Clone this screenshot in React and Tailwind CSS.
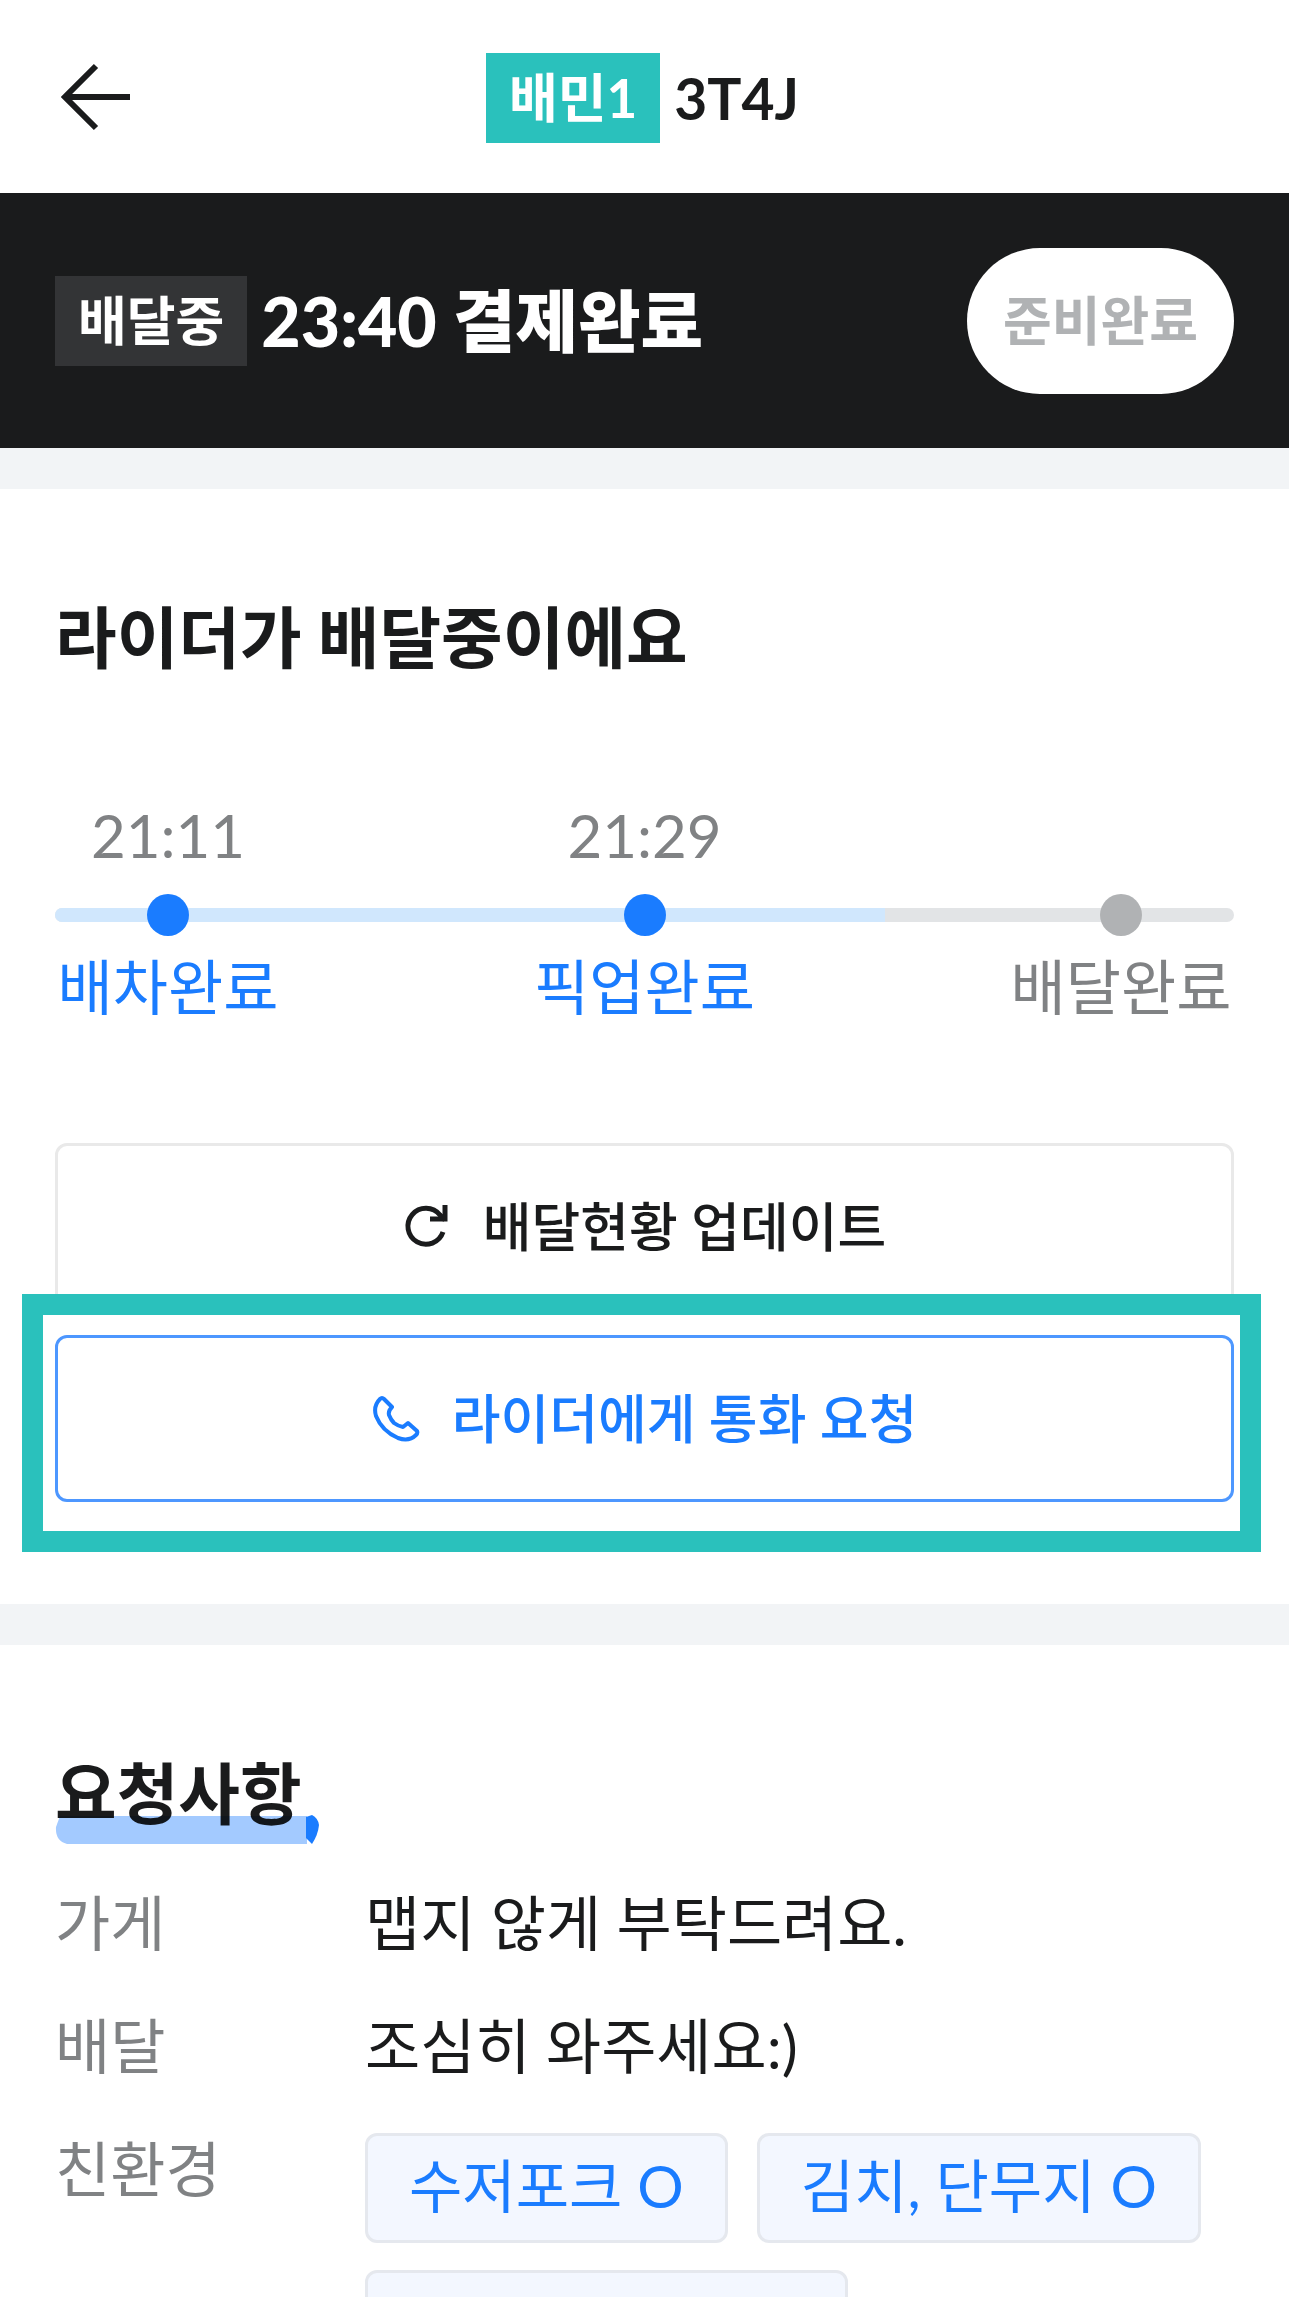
import clsx from 'clsx';

const steps = [
  { time: '21:11', label: '배차완료', done: true },
  { time: '21:29', label: '픽업완료', done: true },
  { time: '', label: '배달완료', done: false },
];

const ArrowLeft = () => (
  <svg viewBox="0 0 72 68" className="w-[72px] h-[68px]" fill="none" stroke="#1a1b1c" strokeWidth="6">
    <path d="M36 3 L5 34 L36 65 M5 34 H70" />
  </svg>
);

const RefreshIcon = () => (
  <svg viewBox="0 0 48 48" className="size-12" fill="none" stroke="#1a1b1c" strokeWidth="5">
    <path d="M40 29 A18 18 0 1 1 37 12 L42 17" />
    <path d="M42 2 V16 H27" />
    <path d="M35 16 L42 9 V16 Z" fill="#1a1b1c" stroke="none" />
  </svg>
);

const PhoneIcon = () => (
  <svg viewBox="0 0 48 48" className="size-12" fill="none" stroke="#1a7cff" strokeWidth="4" strokeLinejoin="round">
    <path d="M8 4 Q10 2 12 4 L20 12 Q16 16 17 20 Q19 25 22 28 Q26 31 31 32 L36 28 L45 36 Q46 38 44 40 Q37 47 26 43 Q10 36 4 21 Q1 11 8 4 Z" />
  </svg>
);

const Header = () => (
  <header className="grid grid-cols-[1fr_auto_1fr] items-center h-[193px] pl-[60px] pr-16">
    <button type="button" aria-label="뒤로" className="justify-self-start">
      <ArrowLeft />
    </button>
    <h1 className="flex items-center gap-[14px] pt-[2px] font-bold">
      <span className="bg-[#2ac1bc] text-white text-[53px] leading-[90px] px-[23px]">배민1</span>
      <span className="text-[57px] leading-[90px]">3T4J</span>
    </h1>
  </header>
);

const StatusBar = () => (
  <section className="flex items-center justify-between h-[255px] px-[55px] bg-[#1a1b1c] text-white font-bold">
    <div className="flex items-center gap-[14px]">
      <span className="bg-[#333436] text-[53px] leading-[90px] px-[23px]">배달중</span>
      <strong className="text-[68px] leading-[96px]">23:40 결제완료</strong>
    </div>
    <button type="button" className="bg-white text-[#b0b2b4] text-[53px] leading-[146px] rounded-full px-9">
      준비완료
    </button>
  </section>
);

const Timeline = () => (
  <div className="relative mt-[120px]">
    <div className="absolute inset-x-0 top-[103px] h-[14px] rounded-full bg-[#e2e4e6] overflow-hidden">
      <div className="h-full bg-[#d0e7fd]" style={{ width: '70.4%' }} />
    </div>
    <ol className="relative flex justify-between text-[60px] leading-[60px]">
      {steps.map((step) => (
        <li key={step.label} className="flex flex-col items-center w-[226px]">
          <time className="h-[60px] text-[#808284]">{step.time}</time>
          <span className={clsx('size-[42px] mt-[29px] mb-[21px] rounded-full', step.done ? 'bg-[#1a7cff]' : 'bg-[#b0b2b4]')} />
          <span className={step.done ? 'text-[#1a7cff]' : 'text-[#808284]'}>{step.label}</span>
        </li>
      ))}
    </ol>
  </div>
);

const ActionButton = ({ icon, className, children }) => (
  <button
    type="button"
    className={clsx('flex items-center justify-center gap-8 w-full h-[167px] border-[3px] rounded-xl text-[53px] leading-[80px] font-medium', className)}
  >
    {icon}
    {children}
  </button>
);

const Row = ({ label, children }) => (
  <div className="flex">
    <dt className="w-[310px] shrink-0 text-[#808284]">{label}</dt>
    <dd className="flex-1">{children}</dd>
  </div>
);

const Chip = ({ children, className }) => (
  <li className={clsx('h-[110px] px-[41px] border-[3px] border-[#e5e8ee] rounded-xl bg-[#f3f7ff] text-[#1a7cff] text-[58px] leading-[100px]', className)}>
    {children}
  </li>
);

const Divider = () => <div className="h-[41px] bg-[#f2f4f6]" />;

const App = () => {
  return (
    <main
      lang="ko"
      className="h-screen overflow-hidden bg-white text-[#1a1b1c] font-[Lato,'Noto_Sans_CJK_KR',sans-serif]"
    >
      <Header />
      <StatusBar />
      <Divider />

      <section className="px-[55px] pt-[100px] pb-[102px]">
        <h2 className="text-[67px] leading-[96px] font-bold">라이더가 배달중이에요</h2>
        <Timeline />
        <div className="mt-[126px]">
          <ActionButton icon={<RefreshIcon />} className="border-[#e9e9e9]">
            배달현황 업데이트
          </ActionButton>
          <div className="relative mt-[25px]">
            <ActionButton icon={<PhoneIcon />} className="border-[#4d97ff] text-[#1a7cff]">
              라이더에게 통화 요청
            </ActionButton>
            {/* highlight frame around the call button */}
            <div className="absolute -left-[33px] -right-[27px] -top-[41px] -bottom-[50px] border-[21px] border-[#2ac1bc] pointer-events-none" />
          </div>
        </div>
      </section>

      <Divider />

      <section className="px-[55px] pt-[100px]">
        <h2 className="relative w-fit text-[67px] leading-[96px] font-bold">
          요청사항
          <svg viewBox="0 0 264 30" className="absolute left-0 top-[70px] w-[264px] h-[30px] mix-blend-multiply">
            <path d="M5 1 H252 V29 H12 Q0 26 1 12 Z" fill="#a3caff" />
            <path d="M251 2 L257 0 Q263 3 264 10 Q263 20 257 29 L251 23 Z" fill="#1a7cff" />
          </svg>
        </h2>
        <dl className="flex flex-col gap-[43px] mt-[42px] text-[60px] leading-[80px]">
          <Row label="가게">맵지 않게 부탁드려요.</Row>
          <Row label="배달">조심히 와주세요:)</Row>
          <Row label="친환경">
            <ul className="flex flex-wrap gap-x-[29px] gap-y-[27px] pt-1">
              <Chip>수저포크 O</Chip>
              <Chip>김치, 단무지 O</Chip>
              <Chip className="w-[483px]" />
            </ul>
          </Row>
        </dl>
      </section>
    </main>
  );
};

export default App;
